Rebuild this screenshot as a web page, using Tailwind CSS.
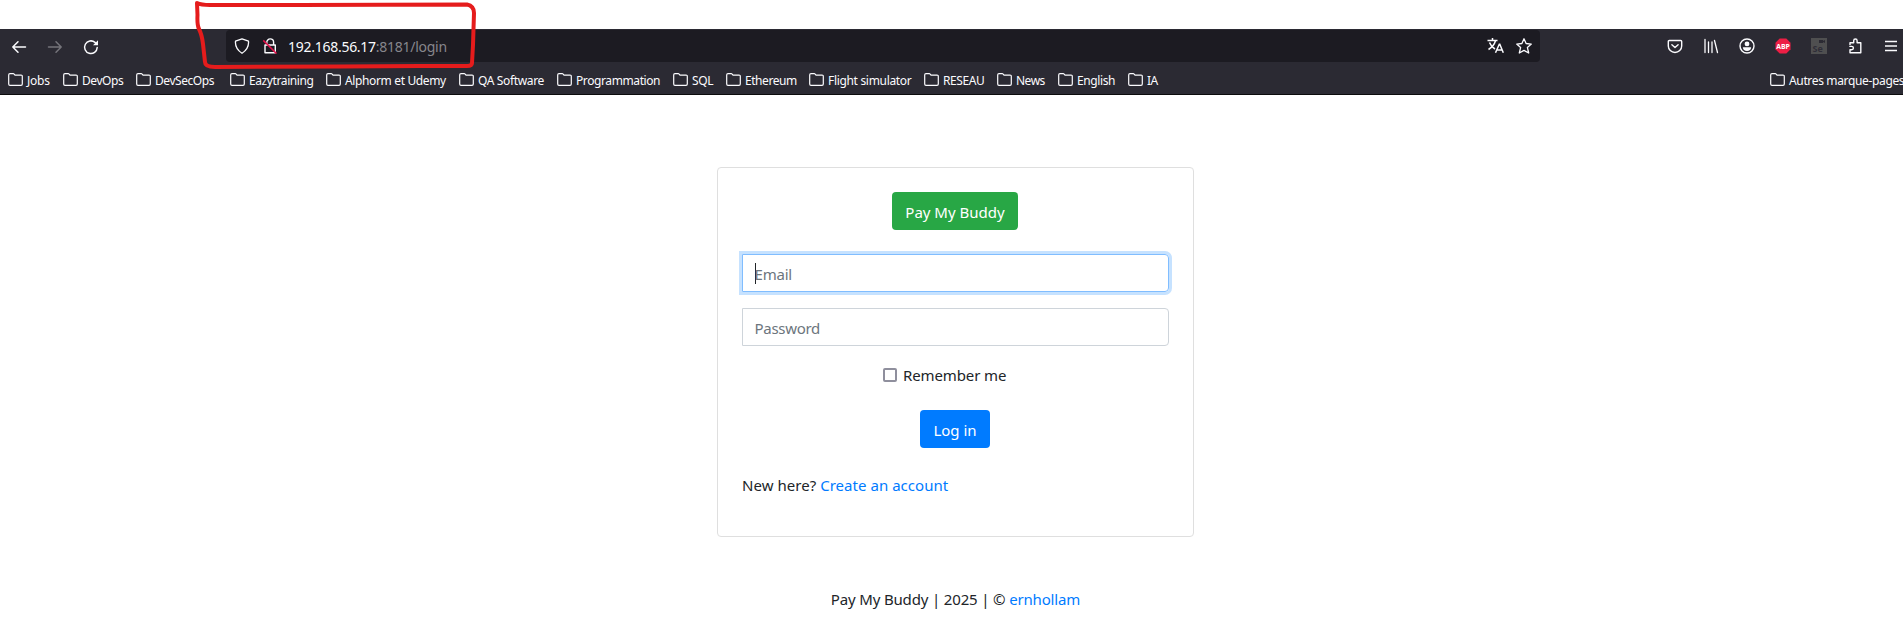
<!DOCTYPE html>
<html lang="fr">
<head>
<meta charset="utf-8">
<title>Pay My Buddy</title>
<script src="https://cdn.jsdelivr.net/npm/@tailwindcss/browser@4"></script>
</head>
<body class="relative h-[638px] overflow-hidden bg-white font-['Noto_Sans',sans-serif] text-[#212529]">
<svg width="0" height="0" class="hidden"><defs>
<symbol id="folder" viewBox="0 0 15 13"><path d="M.7 11V2Q.7.7 2 .7h3.2q.6 0 1 .5l.8.9h6Q14.300 2.100 14.300 3.400V11q0 1.300-1.300 1.300H2Q.7 12.300.7 11z" fill="none" stroke="#fbfbfe" stroke-width="1.200"/></symbol>
</defs></svg>
<header class="mt-[29px] flex h-[66px] flex-col border-b border-[#0c0c0d] bg-[#2b2a33] text-[#fbfbfe]">
  <div class="flex h-[34px] shrink-0 pt-px">
    <div class="flex w-[226px] shrink-0 items-center gap-[20px] pl-[11px]">
      <svg class="size-4" viewBox="0 0 16 16" fill="none" stroke="#fbfbfe" stroke-width="1.500" stroke-linecap="round" stroke-linejoin="round"><path d="M14.500 8H1.800M7 2.800 1.800 8 7 13.200"/></svg>
      <svg class="size-4" viewBox="0 0 16 16" fill="none" stroke="#75747b" stroke-width="1.500" stroke-linecap="round" stroke-linejoin="round"><path d="M1.500 8h12.700M9 2.800 14.200 8 9 13.200"/></svg>
      <svg class="size-4" viewBox="0 0 16 16" fill="none" stroke="#fbfbfe" stroke-width="1.500" stroke-linecap="round"><path d="M14.200 8.500A6.300 6.300 0 1 1 12 3.400l1.500 1.400"/><path d="M15 1.300v5H10z" fill="#fbfbfe" stroke="none"/></svg>
    </div>
    <div class="flex h-8 w-[1314px] shrink-0 items-center rounded bg-[#1c1b22] pl-2">
      <svg class="size-4 shrink-0" viewBox="0 0 16 16" fill="none" stroke="#fbfbfe" stroke-width="1.300" stroke-linejoin="round"><path d="M8 .8 14.500 3.200Q15.200 10.500 8 15.300.8 10.500 1.500 3.200z"/></svg>
      <svg class="ml-3 size-4 shrink-0" viewBox="0 0 16 16" fill="none" stroke="#fbfbfe" stroke-width="1.400"><path d="M4.800 7V4.300a3.400 3.400 0 0 1 6.800 0V7M3 7h10.300v7.800H3z" stroke-linejoin="round"/><path d="M1.300 2.400 14.500 15.600" stroke="#e3114a" stroke-width="1.500"/></svg>
      <div class="ml-[10px] pt-0.5 text-[14px] leading-8 tracking-[-0.270px]">192.168.56.17<span class="text-[#87868c]">:8181/login</span></div>
      <svg class="ml-auto h-4 w-[17px] shrink-0" viewBox="0 0 17 16" fill="none" stroke="#fbfbfe" stroke-width="1.500"><path d="M.5 2.500h10M5.500 0v2.500M8.500 2.700Q7 8 1.500 11.500M2.500 4.500Q4 8.500 8 11"/><path d="M8.500 14.800 12.300 6.200h.5l3.500 8.600M9.800 12h5.500"/></svg>
      <svg class="mr-2 ml-3 size-4 shrink-0" viewBox="0 0 16 16" fill="none" stroke="#fbfbfe" stroke-width="1.300" stroke-linejoin="round"><path d="m8 .8 2.100 4.700 5.200.6-3.900 3.500 1.300 5.400L8 12.400 3.300 15l1.300-5.400L.7 6.100l5.200-.6z"/></svg>
    </div>
    <div class="flex h-8 flex-1 items-center pl-[127px]">
      <svg class="size-4 shrink-0" viewBox="0 0 16 16" fill="none" stroke="#fbfbfe" stroke-width="1.400" stroke-linecap="round" stroke-linejoin="round"><path d="M2.300 2.500h11.400q1 0 1 1V8A6.700 6.500 0 0 1 1.300 8V3.500q0-1 1-1zM4.900 6.700 8 9.600l3.100-2.900"/></svg>
      <svg class="ml-5 size-4 shrink-0" viewBox="0 0 16 16" fill="none" stroke="#fbfbfe" stroke-width="1.300" stroke-linecap="round"><path d="M2 1.500v13M5.500 4v10.500M9 4v10.500M11.500 2.500l3 12"/></svg>
      <svg class="ml-5 size-4 shrink-0" viewBox="0 0 16 16"><circle cx="8" cy="8" r="7" fill="none" stroke="#fbfbfe" stroke-width="1.400"/><circle cx="8" cy="5.900" r="2.400" fill="#fbfbfe"/><path d="M3.800 9.200h8.400q-.4 3.800-4.200 3.800T3.800 9.200z" fill="#fbfbfe"/></svg>
      <svg class="ml-5 size-4 shrink-0" viewBox="0 0 17 17"><path d="M5 .5h7L16.500 5v7L12 16.500H5L.5 12V5z" fill="#ed1e45"/><text x="8.500" y="11.500" text-anchor="middle" font-family="Open Sans" font-weight="700" font-size="8" textLength="14.500" lengthAdjust="spacingAndGlyphs" fill="#fff">ABP</text></svg>
      <svg class="ml-5 size-4 shrink-0" viewBox="0 0 16 16"><path d="M0 0h16v16H0z" fill="#4f4f50"/><path d="M8 2h4v3H8zM12 3l2-1v3l-2-1z" fill="#2b2a33"/><text x="1.500" y="13.800" font-family="Open Sans" font-weight="700" font-size="9" fill="#2f2e38">Se</text></svg>
      <svg class="ml-5 size-4 shrink-0" viewBox="0 0 16 16" fill="none" stroke="#fbfbfe" stroke-width="1.400" stroke-linejoin="round"><path d="M3 7V4.800h3.700V2.700a1.700 1.700 0 0 1 3.400 0v2.100h3.700v10H3V11.800h1.700a1.700 1.700 0 0 0 0-3.400H2.300"/></svg>
      <svg class="ml-5 size-4 shrink-0" viewBox="0 0 16 16" fill="none" stroke="#fbfbfe" stroke-width="1.300"><path d="M2 3.500h12M2 8h12M2 12.500h12"/></svg>
    </div>
  </div>
  <nav class="flex h-[31px] shrink-0 items-center pt-[5px] pl-2 text-[12px] whitespace-nowrap">
    <div class="flex w-[55px] shrink-0 items-center gap-1"><svg class="-mt-[3px] h-[13px] w-[15px] shrink-0"><use href="#folder"/></svg><span class="tracking-[-0.250px]">Jobs</span></div>
    <div class="flex w-[73px] shrink-0 items-center gap-1"><svg class="-mt-[3px] h-[13px] w-[15px] shrink-0"><use href="#folder"/></svg><span class="tracking-[-0.450px]">DevOps</span></div>
    <div class="flex w-[94px] shrink-0 items-center gap-1"><svg class="-mt-[3px] h-[13px] w-[15px] shrink-0"><use href="#folder"/></svg><span class="tracking-[-0.450px]">DevSecOps</span></div>
    <div class="flex w-[96px] shrink-0 items-center gap-1"><svg class="-mt-[3px] h-[13px] w-[15px] shrink-0"><use href="#folder"/></svg><span class="tracking-[-0.400px]">Eazytraining</span></div>
    <div class="flex w-[133px] shrink-0 items-center gap-1"><svg class="-mt-[3px] h-[13px] w-[15px] shrink-0"><use href="#folder"/></svg><span class="tracking-[-0.360px]">Alphorm et Udemy</span></div>
    <div class="flex w-[98px] shrink-0 items-center gap-1"><svg class="-mt-[3px] h-[13px] w-[15px] shrink-0"><use href="#folder"/></svg><span class="tracking-[-0.360px]">QA Software</span></div>
    <div class="flex w-[116px] shrink-0 items-center gap-1"><svg class="-mt-[3px] h-[13px] w-[15px] shrink-0"><use href="#folder"/></svg><span class="tracking-[-0.400px]">Programmation</span></div>
    <div class="flex w-[53px] shrink-0 items-center gap-1"><svg class="-mt-[3px] h-[13px] w-[15px] shrink-0"><use href="#folder"/></svg><span class="tracking-[-0.400px]">SQL</span></div>
    <div class="flex w-[83px] shrink-0 items-center gap-1"><svg class="-mt-[3px] h-[13px] w-[15px] shrink-0"><use href="#folder"/></svg><span class="tracking-[-0.450px]">Ethereum</span></div>
    <div class="flex w-[115px] shrink-0 items-center gap-1"><svg class="-mt-[3px] h-[13px] w-[15px] shrink-0"><use href="#folder"/></svg><span class="tracking-[-0.320px]">Flight simulator</span></div>
    <div class="flex w-[73px] shrink-0 items-center gap-1"><svg class="-mt-[3px] h-[13px] w-[15px] shrink-0"><use href="#folder"/></svg><span class="tracking-[-0.400px]">RESEAU</span></div>
    <div class="flex w-[61px] shrink-0 items-center gap-1"><svg class="-mt-[3px] h-[13px] w-[15px] shrink-0"><use href="#folder"/></svg><span class="tracking-[-0.500px]">News</span></div>
    <div class="flex w-[70px] shrink-0 items-center gap-1"><svg class="-mt-[3px] h-[13px] w-[15px] shrink-0"><use href="#folder"/></svg><span class="tracking-[-0.400px]">English</span></div>
    <div class="flex w-[55px] shrink-0 items-center gap-1"><svg class="-mt-[3px] h-[13px] w-[15px] shrink-0"><use href="#folder"/></svg><span class="tracking-[-0.500px]">IA</span></div>
    <div class="ml-auto flex w-[133px] shrink-0 items-center gap-1"><svg class="-mt-[3px] h-[13px] w-[15px] shrink-0"><use href="#folder"/></svg><span class="tracking-[-0.350px]">Autres marque-pages</span></div>
  </nav>
</header>
<main class="flex flex-col items-center pt-[72px] pl-[8px] text-[15px] leading-6">
  <form class="flex h-[370px] w-[477px] flex-col items-center rounded border border-[#dfdfdf] pt-6 pr-[25px] pl-6">
    <div class="flex h-[38px] w-[126px] items-center justify-center rounded bg-[#28a745] pt-px text-white"><span>Pay My Buddy</span></div>
    <div class="mt-6 flex h-[38px] w-[427px] items-center rounded-r border border-[#80bdff] px-3 pt-px text-[#6c757d] shadow-[0_0_0_3px_#c6e2ff]"><span class="-my-1 h-[21px] w-px bg-[#212529]"></span><span class="-ml-px tracking-[-0.200px]">Email</span></div>
    <div class="mt-4 flex h-[38px] w-[427px] items-center rounded-r border border-[#ced4da] px-3 pt-px text-[#6c757d]"><span class="tracking-[-0.300px]">Password</span></div>
    <label class="mt-[17px] -ml-[21px] flex h-6 w-[123px] items-center gap-[6px]"><span class="-mt-px size-[14px] shrink-0 rounded-[2px] border-2 border-[#8f8f9d]"></span><span class="whitespace-nowrap tracking-[-0.120px]">Remember me</span></label>
    <div class="mt-[23px] flex h-[38px] w-[70px] items-center justify-center rounded bg-[#007bff] pt-px whitespace-nowrap text-white"><span>Log in</span></div>
    <p class="mt-[25px] w-full tracking-[0.040px]">New here? <a class="text-[#007bff]">Create an account</a></p>
  </form>
  <footer class="mt-[50px]"><span class="tracking-[-0.160px]">Pay My Buddy | 2025 | © <a class="text-[#007bff]">ernhollam</a></span></footer>
</main>
<svg class="absolute top-0 left-0" width="500" height="80" fill="none" stroke="#e51c1c" stroke-width="4" stroke-linecap="round" stroke-linejoin="round"><path d="M197 3Q201 5 210 5L300 5 467 4.500Q474 6 474 13L473 45 472 63Q472 66 467 66L420 66 340 66.500 215 67Q205 67 205 62L203 44Q202 35 199 29 197 25 197.500 15z"/></svg>
</body>
</html>
